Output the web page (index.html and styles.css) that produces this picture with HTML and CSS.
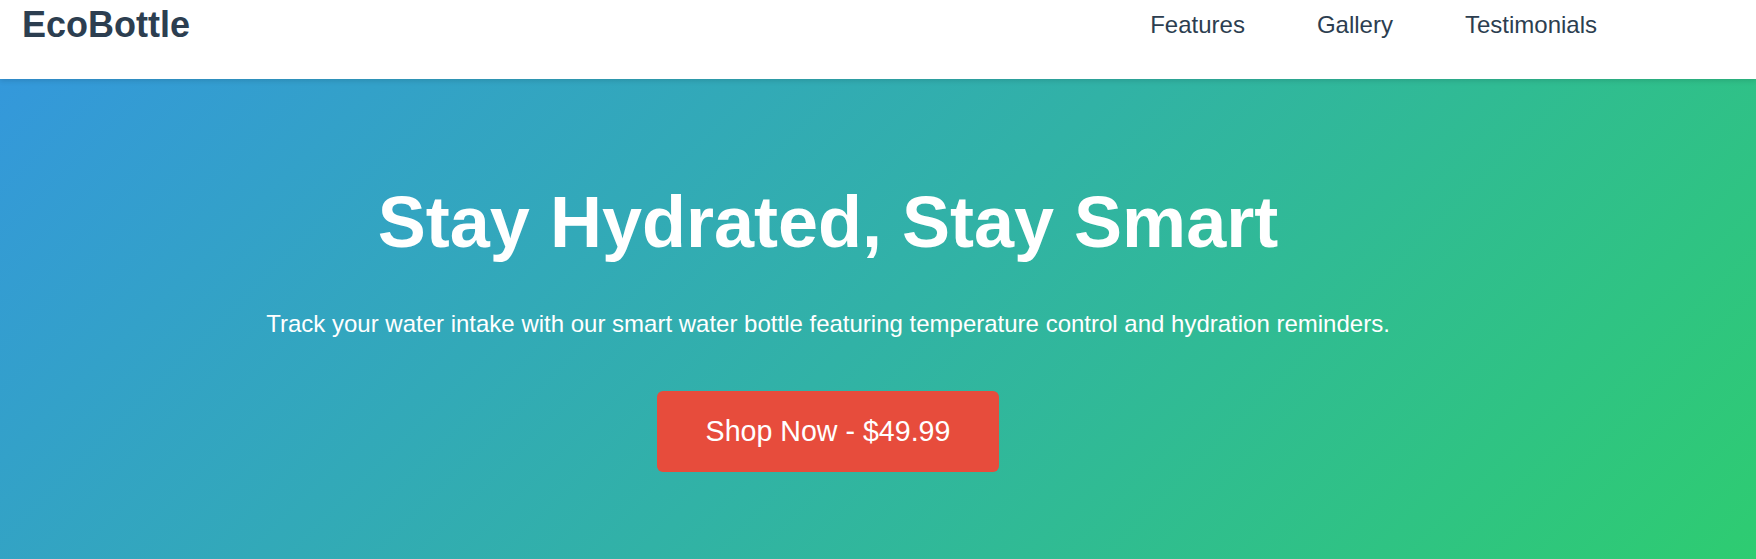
FILE: index.html
```html
<!DOCTYPE html>
<html lang="en">
<head>
<meta charset="utf-8">
<title>EcoBottle</title>
<link rel="stylesheet" href="styles.css">
</head>
<body>
<header class="site-header">
  <div class="bar">
    <div class="logo">EcoBottle</div>
    <nav class="nav">
      <a href="#features">Features</a>
      <a href="#gallery">Gallery</a>
      <a href="#testimonials">Testimonials</a>
    </nav>
  </div>
</header>
<section class="hero">
  <div class="hero-inner">
    <h1 class="hero-title">Stay Hydrated, Stay Smart</h1>
    <p class="hero-text">Track your water intake with our smart water bottle featuring temperature control and hydration reminders.</p>
    <a class="btn" href="#shop">Shop Now - $49.99</a>
  </div>
</section>
</body>
</html>
```
FILE: styles.css
```css
* { box-sizing: border-box; }
html, body { margin: 0; padding: 0; }
body {
  font-family: "Liberation Sans", Arial, sans-serif;
  color: #2c3e50;
  background: #ffffff;
  overflow: hidden;
}
.site-header {
  position: relative;
  z-index: 2;
  height: 79px;
  background: #ffffff;
  box-shadow: 0 2px 5px rgba(0, 0, 0, 0.12);
  padding: 0 159px 0 22px;
}
.bar {
  height: 50px;
  display: flex;
  align-items: center;
  justify-content: space-between;
}
.logo {
  font-size: 36px;
  font-weight: 700;
  color: #2c3e50;
}
.nav {
  display: flex;
  gap: 72px;
}
.nav a {
  font-size: 24px;
  color: #2c3e50;
  text-decoration: none;
}
.hero {
  height: 480px;
  background: linear-gradient(135deg, #3498db 0%, #2ecc71 100%);
  padding: 102px 100px 0 0;
}
.hero-inner {
  display: flex;
  flex-direction: column;
  align-items: center;
  text-align: center;
}
.hero-title {
  margin: 0;
  font-size: 72px;
  font-weight: 700;
  color: #ffffff;
}
.hero-text {
  margin: 47px 0 0;
  font-size: 24px;
  color: #ffffff;
}
.btn {
  margin-top: 53px;
  display: inline-block;
  background: #e74c3c;
  color: #ffffff;
  text-decoration: none;
  font-size: 28.6px;
  padding: 24px 49px;
  border-radius: 6px;
}
```
